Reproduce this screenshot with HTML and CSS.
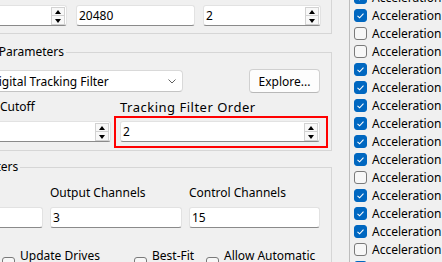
FILE: index.html
```html
<!DOCTYPE html>
<html lang="en">
<head>
    <meta charset="UTF-8">
    <title>Control Settings</title>
    <link rel="stylesheet" href="styles.css">
</head>
<body>
    <div class="window">
        <div class="left">
            <fieldset class="group top-group">
                <div class="row">
                    <div class="field spin w-a"><span class="val"></span><span class="arrows"><i class="up"></i><i class="down"></i></span></div>
                    <div class="field w-b"><span class="val">20480</span></div>
                    <div class="field spin w-c"><span class="val">2</span><span class="arrows"><i class="up"></i><i class="down"></i></span></div>
                </div>
            </fieldset>

            <fieldset class="group mid-group">
                <legend class="shifted">Control Parameters</legend>
                <div class="row combo-row">
                    <div class="combo">Digital Tracking Filter
                        <svg class="chevron" width="8" height="5" viewBox="0 0 8 5"><polyline points="0.5,0.5 4,4 7.5,0.5" fill="none" stroke="#606060" stroke-width="1"/></svg>
                    </div>
                    <button class="btn">Explore...</button>
                </div>
                <div class="row labels gap-top">
                    <label class="l-cutoff">Cutoff</label>
                    <label class="l-order">Tracking Filter Order</label>
                </div>
                <div class="row">
                    <div class="field spin w-cut"><span class="val"></span><span class="arrows"><i class="up"></i><i class="down"></i></span></div>
                    <div class="highlight">
                        <div class="field spin w-ord"><span class="val">2</span><span class="arrows"><i class="up"></i><i class="down"></i></span></div>
                    </div>
                </div>
            </fieldset>

            <fieldset class="group low-group">
                <legend class="tail">Parameters</legend>
                <div class="row labels">
                    <label class="w-first"></label>
                    <label class="w-out">Output Channels</label>
                    <label class="w-ctl">Control Channels</label>
                </div>
                <div class="row">
                    <div class="field w-first"><span class="val"></span></div>
                    <div class="field w-out"><span class="val">3</span></div>
                    <div class="field w-ctl"><span class="val">15</span></div>
                </div>
                <div class="row options">
                    <div class="opt o-update"><span class="box"></span><span>Update Drives<br>on Apply</span></div>
                    <div class="opt o-fit"><span class="box"></span><span>Best-Fit<br>Model</span></div>
                    <div class="opt o-auto"><span class="box"></span><span>Allow Automatic<br>Recovery</span></div>
                </div>
            </fieldset>
        </div>

        <div class="side">
            <ul class="channel-list" id="channels"></ul>
        </div>
    </div>

    <script>
        let checked = [1, 1, 0, 0, 1, 1, 1, 1, 1, 1, 0, 1, 1, 1, 0, 1];
        let list = document.getElementById("channels");
        checked.forEach(c => {
            let li = document.createElement("li");
            li.innerHTML = `<span class="box ${c ? 'on' : ''}">${c ? '<svg width="13" height="13" viewBox="0 0 13 13"><polyline points="3.5,6.8 5.6,8.8 9.5,4.6" fill="none" stroke="#fff" stroke-width="1.1"/></svg>' : ''}</span><span>Acceleration</span>`;
            list.appendChild(li);
        });
    </script>
</body>
</html>
```

FILE: styles.css
```css
body {
    margin: 0;
    background: #f0f0f0;
    font-family: "Segoe UI", "Noto Sans", sans-serif;
    font-size: 12px;
    color: #000;
    overflow: hidden;
}
.window {
    display: flex;
    height: 262px;
    overflow: hidden;
}
.left {
    flex: none;
    width: 392px;
    margin-left: -60px;
}
.group {
    border: 1px solid #d6d6d6;
    margin: 0;
    padding: 0 10px 0 19px;
    min-width: 0;
}
.group legend {
    padding: 0 2px;
    line-height: 16px;
}
.group legend.shifted {
    margin-left: -8px;
}
.group legend.tail {
    margin-left: -9px;
}
.top-group {
    margin-top: -20px;
    padding-top: 24px;
    padding-bottom: 7px;
}
.mid-group {
    margin-top: 10px;
    padding-top: 9px;
    padding-bottom: 8px;
}
.low-group {
    margin-top: 8px;
    padding-top: 10px;
    height: 110px;
}
.row {
    display: flex;
    align-items: center;
}
.labels {
    line-height: 16px;
    margin-bottom: 6px;
}
.gap-top {
    margin-top: 6px;
}
.field {
    box-sizing: border-box;
    height: 21px;
    background: #fff;
    border: 1px solid #e2e2e2;
    border-bottom-color: #8a8a8a;
    border-radius: 3px;
    display: flex;
    align-items: center;
    padding-left: 2px;
}
.field .val {
    flex: 1;
}
.arrows {
    display: flex;
    flex-direction: column;
    width: 14px;
    height: 18px;
    margin-right: 1px;
}
.arrows i {
    flex: 1;
    position: relative;
    border: 1px solid #d2d2d2;
    background: #f8f8f8;
}
.arrows i + i {
    border-top: none;
}
.arrows i::after {
    content: "";
    position: absolute;
    left: 3px;
    top: 2px;
    border-left: 3px solid transparent;
    border-right: 3px solid transparent;
}
.arrows .up::after {
    border-bottom: 4px solid #000;
}
.arrows .down::after {
    border-top: 4px solid #000;
    top: 3px;
}
.w-a { width: 107px; }
.w-b { width: 119px; margin-left: 9px; }
.w-c { width: 118px; margin-left: 8px; }
.w-cut { width: 151px; }
.w-ord { width: 200px; }
.w-first { flex: none; width: 83px; }
.w-out { flex: none; width: 132px; margin-left: 7px; }
.w-ctl { flex: none; width: 131px; margin-left: 7px; }
.l-cutoff { margin-left: 40px; width: 120px; }
.l-order { font-size: 13px; letter-spacing: 0.5px; }
.combo-row {
    height: 24px;
}
.combo {
    box-sizing: border-box;
    width: 200px;
    height: 22px;
    margin-left: 23px;
    padding-left: 6px;
    background: #fff;
    border: 1px solid #d9d9d9;
    border-bottom-color: #c4c4c4;
    border-radius: 4px;
    display: flex;
    align-items: center;
    justify-content: space-between;
    padding-right: 6px;
}
.btn {
    box-sizing: border-box;
    width: 71px;
    height: 24px;
    margin-left: 66px;
    font: inherit;
    color: #000;
    background: #fdfdfd;
    border: 1px solid #d0d0d0;
    border-bottom-color: #b8b8b8;
    border-radius: 4px;
    padding: 0;
}
.highlight {
    position: relative;
    margin-left: 9px;
}
.highlight::before {
    content: "";
    position: absolute;
    left: -6px;
    top: -5px;
    right: -8px;
    bottom: -6px;
    border: 2px solid #f00;
}
.options {
    align-items: flex-start;
    line-height: 16px;
    margin-top: 20px;
}
.opt {
    display: flex;
    gap: 5px;
}
.opt .box {
    margin-top: 9px;
}
.o-update { margin-left: 42px; width: 132px; }
.o-fit { width: 72px; }
.box {
    flex: none;
    box-sizing: border-box;
    width: 13px;
    height: 13px;
    border: 1px solid #7a7a7a;
    border-radius: 3px;
    background: #f7f7f7;
}
.box.on {
    background: #0067c0;
    border-color: #0067c0;
}
.box svg {
    display: block;
    margin: -1px;
}
.side {
    flex: 1;
    margin-left: 17px;
    border-left: 1px solid #bdbdbd;
}
.channel-list {
    list-style: none;
    margin: -12px 0 0;
    padding: 0 0 0 4px;
}
.channel-list li {
    display: flex;
    align-items: center;
    gap: 5px;
    height: 18px;
    white-space: nowrap;
}
```
